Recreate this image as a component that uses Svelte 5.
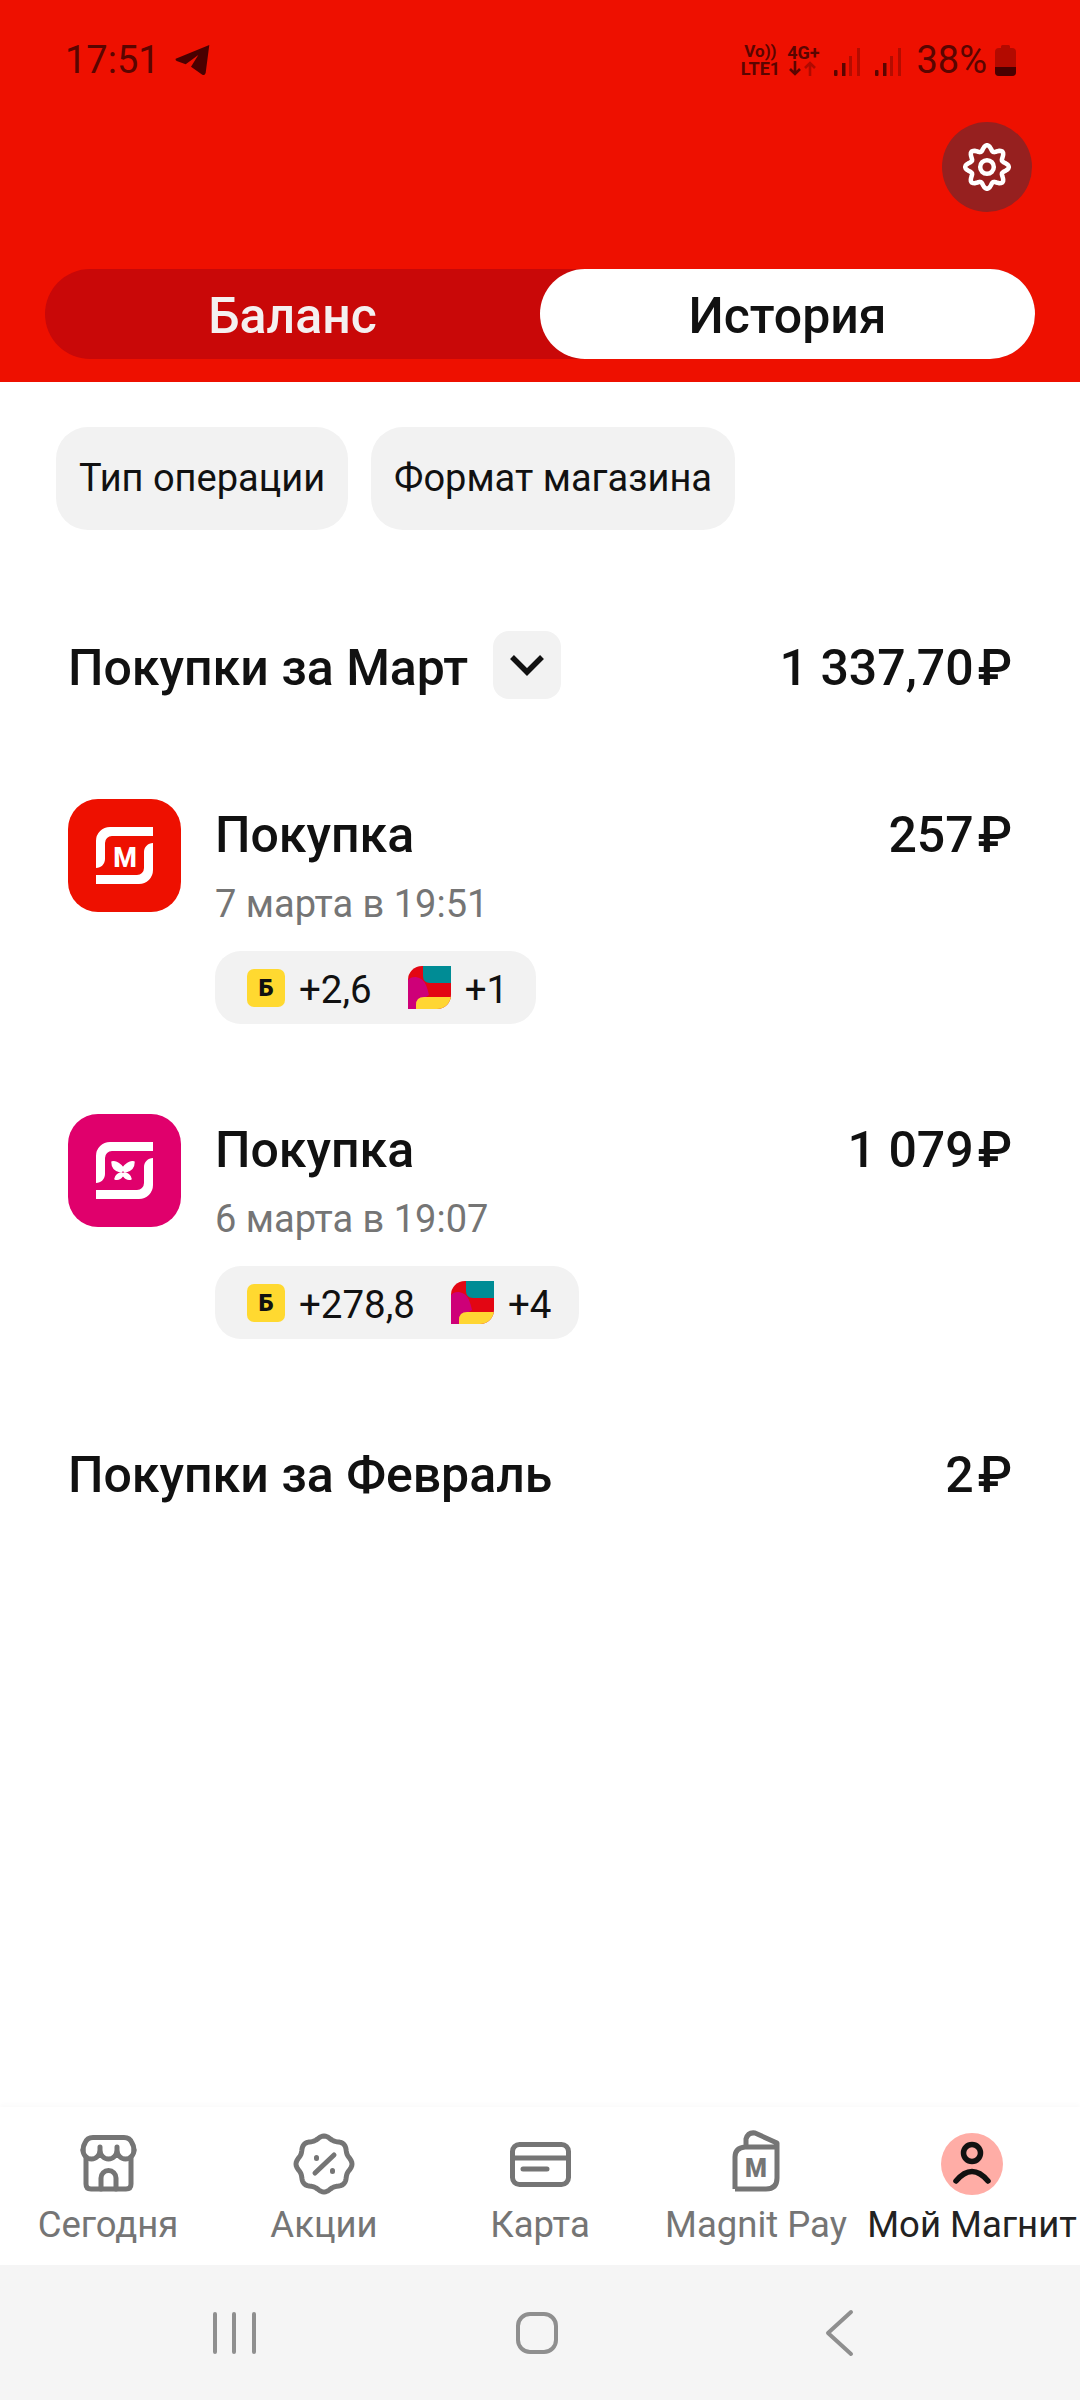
<script>
  const purchases = [
    { id: 'm', date: '7 марта в 19:51', sum: '257', bonus: '+2,6', points: '+1' },
    { id: 'k', date: '6 марта в 19:07', sum: '1 079', bonus: '+278,8', points: '+4' }
  ];

  // wavy closed outline, used for the gear and the promo badge
  function wavy(cx, cy, r, amp, n) {
    let d = '';
    const steps = n * 12;
    for (let i = 0; i < steps; i++) {
      const a = (i / steps) * Math.PI * 2 - Math.PI / 2;
      const rr = r + amp * Math.cos(n * (a + Math.PI / 2));
      d += (i ? 'L' : 'M') + (cx + rr * Math.cos(a)).toFixed(2) + ' ' + (cy + rr * Math.sin(a)).toFixed(2);
    }
    return d + 'Z';
  }
</script>

<div class="screen">
  <header class="head">
    <div class="status">
      <div class="status-left">
        <span class="time">17:51</span>
        <svg class="plane" width="36" height="32" viewBox="0 0 36 32">
          <path d="M35.300 1L1.700 14.700Q1 16.300 2.700 17L11.700 20.300L24.300 11L17 22.700L28.300 30.700Q31 32 31.700 28.700Z" fill="#4a0000" />
        </svg>
      </div>
      <div class="status-right">
        <div class="net">
          <span class="vo">Vo))</span>
          <span class="lte">LTE1</span>
        </div>
        <div class="net gen">
          <span class="lte">4G+</span>
          <svg width="30" height="15" viewBox="0 0 30 15">
            <path d="M7 0V13M2 8l5 5 5-5" fill="none" stroke="#5a0500" stroke-width="2.600" />
            <path d="M22 15V2M17 7l5-5 5 5" fill="none" stroke="#b00a00" stroke-width="2.600" />
          </svg>
        </div>
        {#each [0, 1] as s}
          <svg class="signal" width="27" height="28" viewBox="0 0 27 28">
            <rect x="0" y="22" width="3.500" height="6" rx="1" fill="#5a0500" />
            <rect x="8" y="15" width="3.500" height="13" fill="#5a0500" />
            <rect x="15" y="8" width="3" height="20" fill="#b50c00" />
            <rect x="23" y="0" width="3" height="28" fill="#b50c00" />
          </svg>
        {/each}
        <span class="pct">38%</span>
        <svg class="battery" width="21" height="31" viewBox="0 0 21 31">
          <path d="M6 3V1.500Q6 0 7.500 0H13.500Q15 0 15 1.500V3H17Q21 3 21 7V27Q21 31 17 31H4Q0 31 0 27V7Q0 3 4 3Z" fill="#b30a00" />
          <path d="M0 22H21V27Q21 31 17 31H4Q0 31 0 27Z" fill="#4a0000" />
        </svg>
      </div>
    </div>
    <div class="gear-row">
      <button class="gear" aria-label="Настройки">
        <svg width="60" height="60" viewBox="0 0 60 60" fill="none" stroke="#fff" stroke-width="4.500">
          <path d={wavy(30, 30, 19, 2.800, 8)} stroke-linejoin="round" />
          <circle cx="30" cy="30" r="6.800" />
        </svg>
      </button>
    </div>
    <div class="seg">
      <button class="seg-item">Баланс</button>
      <button class="seg-item active">История</button>
    </div>
  </header>

  <main class="content">
    <div class="chips">
      <button class="chip">Тип операции</button>
      <button class="chip">Формат магазина</button>
    </div>

    <section class="sec-head first">
      <div class="sec-title">
        <h2>Покупки за Март</h2>
        <button class="chev" aria-label="Свернуть">
          <svg width="36" height="24" viewBox="0 0 36 24" fill="none" stroke="#111" stroke-width="5.500">
            <path d="M3 4 L18 19 L33 4" />
          </svg>
        </button>
      </div>
      <span class="amount">1 337,70<span class="rub">₽</span></span>
    </section>

    {#each purchases as p}
      <article class="row">
        <div class="logo {p.id}">
          <svg width="113" height="113" viewBox="0 0 113 113" fill="#fff">
            <path d="M85 28H42A14 14 0 0 0 28 42V69C33 69 37 65 37 60V44A7 7 0 0 1 44 37H85Z" />
            <path d="M28 85H71A14 14 0 0 0 85 71V44C80 44 76 48 76 53V69A7 7 0 0 1 69 76H28Z" />
            {#if p.id === 'm'}
              <text x="57" y="68" text-anchor="middle" class="logo-m">М</text>
            {:else}
              <g stroke="#fff" stroke-width="1.500" stroke-linejoin="round">
                <path d="M55 54C52 50 48 47 44 48C44 53 47 57 53 58Q55 57 55 54ZM55 54C58 50 62 47 66 48C66 53 63 57 57 58Q55 57 55 54Z" />
                <path d="M54 59C50 59 48 61 47 65C50 66 53 64 55 61ZM56 59C60 59 62 61 63 65C60 66 57 64 55 61Z" />
              </g>
            {/if}
          </svg>
        </div>
        <div class="info">
          <div class="line">
            <h3>Покупка</h3>
            <span class="amount">{p.sum}<span class="rub">₽</span></span>
          </div>
          <div class="date">{p.date}</div>
          <div class="pill">
            <span class="b-icon">Б</span>
            <span class="val">{p.bonus}</span>
            <svg class="color-icon" width="43" height="43" viewBox="0 0 43 43">
              <rect width="43" height="43" fill="#e30613" />
              <path d="M0 14Q3 10.500 8 11Q15 12 18 19Q20 24 21 29Q15 33 11 35Q8 37 8 43H0Z" fill="#ce0078" />
              <path d="M15 0H43V17H22Q15 17 15 10Z" fill="#008c95" />
              <path d="M8 43V39Q8 31 16 31H43V43Z" fill="#ffd633" />
            </svg>
            <span class="val">{p.points}</span>
          </div>
        </div>
      </article>
    {/each}

    <section class="sec-head">
      <h2>Покупки за Февраль</h2>
      <span class="amount">2<span class="rub">₽</span></span>
    </section>
  </main>

  <nav class="tabs">
    <div class="tab">
      <svg width="64" height="64" viewBox="0 0 64 64" fill="none" stroke="#757575" stroke-width="5" stroke-linecap="round" stroke-linejoin="round">
        <path d="M7 18Q7 14 9 11Q11 5.500 17 5.500H48Q54 5.500 56 11Q58 14 58 18" />
        <path d="M7 18A8.500 9 0 0 0 24 18A8.500 9 0 0 0 41 18A8.500 9 0 0 0 58 18M24 18V15M41 18V15" />
        <path d="M10 25V52Q10 57 15 57H50Q55 57 55 52V25" />
        <path d="M25 57V46A7.500 7.500 0 0 1 40 46V57" />
      </svg>
      <span>Сегодня</span>
    </div>
    <div class="tab">
      <svg width="64" height="64" viewBox="0 0 64 64" fill="none" stroke="#757575" stroke-width="5" stroke-linecap="round" stroke-linejoin="round">
        <path d={wavy(32, 32, 26.500, 1.500, 8)} />
        <path d="M23 41L42 23M24.500 25.500V26.500M40.500 38.500V39.500" />
      </svg>
      <span>Акции</span>
    </div>
    <div class="tab">
      <svg width="64" height="64" viewBox="0 0 64 64" fill="none" stroke="#757575" stroke-width="5" stroke-linecap="round" stroke-linejoin="round">
        <rect x="4.500" y="12.500" width="56" height="40" rx="7" />
        <path d="M4.500 26H60.500M15 37H39" />
      </svg>
      <span>Карта</span>
    </div>
    <div class="tab">
      <svg class="pay" width="64" height="64" viewBox="0 0 64 64" fill="none" stroke="#757575" stroke-width="5" stroke-linejoin="round">
        <path d="M11 57V25Q11 16 21 15H52M22 15V7Q24 0 31 1L53 11V46Q53 57 42 57H11" />
        <text x="32" y="45" text-anchor="middle" class="pay-m">М</text>
      </svg>
      <span>Magnit Pay</span>
    </div>
    <div class="tab current">
      <svg width="64" height="64" viewBox="0 0 64 64" fill="none" stroke="#111" stroke-width="5.500" stroke-linecap="round">
        <circle cx="32" cy="32" r="31" fill="#ffada6" stroke="none" />
        <circle cx="32" cy="21" r="8.500" />
        <path d="M16 49Q32 30 48 49" />
      </svg>
      <span>Мой Магнит</span>
    </div>
  </nav>

  <div class="sysbar">
    <svg width="60" height="44" viewBox="0 0 60 44" stroke="#8f8f8f" stroke-width="4" stroke-linecap="round">
      <path d="M11 3V41M30 3V41M50 3V41" />
    </svg>
    <svg width="44" height="44" viewBox="0 0 44 44" fill="none" stroke="#8f8f8f" stroke-width="4">
      <rect x="3" y="3" width="38" height="38" rx="12" />
    </svg>
    <svg width="32" height="48" viewBox="0 0 32 48" fill="none" stroke="#8f8f8f" stroke-width="4" stroke-linecap="round" stroke-linejoin="round">
      <path d="M27 3L4 24L27 45" />
    </svg>
  </div>
</div>

<style>
  :global(body) {
    margin: 0;
    background: #fff;
  }

  .screen {
    display: flex;
    flex-direction: column;
    min-height: 2400px;
    font-family: Roboto, "Liberation Sans", sans-serif;
    color: #111;
  }

  button {
    border: 0;
    padding: 0;
    font: inherit;
    color: inherit;
    background: none;
  }

  h2,
  h3 {
    margin: 0;
    font-size: 50px;
    line-height: 56px;
    font-weight: 500;
  }

  /* header */
  .head {
    height: 382px;
    box-sizing: border-box;
    padding: 0 45px;
    background: #ee1000;
    display: flex;
    flex-direction: column;
  }

  .status {
    height: 122px;
    margin: 0 -1px 0 20px;
    padding-top: 38px;
    box-sizing: border-box;
    display: flex;
    justify-content: space-between;
    align-items: flex-start;
    color: #5a0500;
  }

  .status-left,
  .status-right {
    display: flex;
    align-items: center;
  }

  .time,
  .pct {
    font-size: 38px;
    line-height: 44px;
  }

  .plane {
    margin-left: 14px;
  }

  .net {
    display: flex;
    flex-direction: column;
    align-items: center;
    width: 40px;
    font-weight: 700;
  }

  .gen {
    width: 34px;
    margin: 0 14px 0 6px;
  }

  .vo {
    font-size: 17px;
    line-height: 17px;
  }

  .lte {
    font-size: 18px;
    line-height: 17px;
  }

  .signal {
    margin-right: 14px;
    margin-top: 4px;
  }

  .battery {
    margin-left: 8px;
    margin-right: 20px;
  }

  .gear-row {
    display: flex;
    justify-content: flex-end;
    height: 147px;
    margin-right: 3px;
  }

  .gear {
    width: 90px;
    height: 90px;
    border-radius: 50%;
    background: #96201f;
    display: flex;
    align-items: center;
    justify-content: center;
  }

  .seg {
    display: grid;
    grid-template-columns: 495px 495px;
    height: 90px;
    border-radius: 45px;
    background: #c90808;
  }

  .seg-item {
    padding-top: 3px;
    border-radius: 45px;
    font-size: 50px;
    font-weight: 500;
    color: #f4f0f0;
  }

  .seg-item.active {
    background: #fff;
    color: #111;
  }

  /* list */
  .content {
    flex: 1;
    padding: 45px 68px 0;
  }

  .chips {
    display: flex;
    gap: 23px;
    margin: 0 0 0 -12px;
  }

  .chip {
    height: 103px;
    padding: 0 23px 2px;
    border-radius: 32px;
    background: #f2f2f2;
    font-size: 38px;
  }

  .sec-head {
    display: flex;
    justify-content: space-between;
    align-items: center;
    height: 68px;
    margin-top: 102px;
  }

  .sec-head.first {
    margin-top: 101px;
  }

  .sec-head.first h2,
  .sec-head.first .amount {
    margin-top: 6px;
  }

  .sec-title {
    display: flex;
    align-items: center;
    gap: 25px;
  }

  .chev {
    width: 68px;
    height: 68px;
    border-radius: 16px;
    background: #f2f2f2;
    display: flex;
    align-items: center;
    justify-content: center;
  }

  .amount {
    font-size: 50px;
    line-height: 56px;
    font-weight: 500;
  }

  .rub {
    margin-left: 4px;
  }

  .row {
    display: flex;
    gap: 34px;
    height: 225px;
    margin-top: 100px;
  }

  .row + .row {
    margin-top: 90px;
  }

  .logo {
    flex: none;
    width: 113px;
    height: 113px;
    border-radius: 30px;
  }

  .logo.m {
    background: #ee1000;
  }

  .logo.k {
    background: #e0006c;
  }

  .logo-m {
    font-size: 27px;
    font-weight: 800;
  }

  .info {
    flex: 1;
    padding-top: 8px;
  }

  .line {
    display: flex;
    justify-content: space-between;
  }

  .date {
    margin-top: 19px;
    font-size: 38px;
    line-height: 44px;
    color: #757575;
  }

  .pill {
    display: inline-flex;
    align-items: center;
    height: 73px;
    margin-top: 25px;
    padding: 0 28px 0 32px;
    border-radius: 26px;
    background: #f2f2f2;
    font-size: 38.500px;
  }

  .b-icon {
    width: 38px;
    height: 38px;
    border-radius: 7px;
    background: #ffd930;
    display: flex;
    align-items: center;
    justify-content: center;
    font-size: 24px;
    font-weight: 900;
  }

  .val {
    margin-left: 14px;
    padding-top: 3px;
  }

  .color-icon {
    margin-left: 36px;
    border-radius: 14px 0 14px 0;
  }

  /* bottom nav */
  .tabs {
    display: grid;
    grid-template-columns: repeat(5, 216px);
    height: 158px;
    box-sizing: border-box;
    padding-top: 25px;
    background: #fff;
    box-shadow: 0 -3px 4px rgba(0, 0, 0, 0.02);
  }

  .tab {
    display: flex;
    flex-direction: column;
    align-items: center;
    font-size: 36.500px;
    line-height: 40px;
    color: #757575;
    white-space: nowrap;
  }

  .tab span {
    margin-top: 9px;
  }

  .tab.current {
    color: #222;
  }

  .tab svg {
    overflow: visible;
  }

  .pay-m {
    font-size: 25px;
    font-weight: 900;
    fill: #757575;
    stroke: none;
  }

  .sysbar {
    height: 135px;
    box-sizing: border-box;
    background: #f5f5f5;
    display: grid;
    grid-template-columns: 1fr 1fr 1fr;
    justify-items: center;
    align-items: center;
    padding: 0 88px 0 82px;
  }
</style>
